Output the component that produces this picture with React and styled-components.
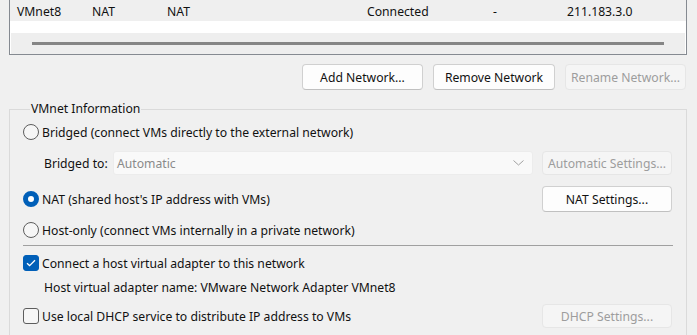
import React from 'react';
import styled, { createGlobalStyle } from 'styled-components';

const GlobalStyle = createGlobalStyle`
  html, body {
    margin: 0;
    padding: 0;
    background: #f0f0f0;
  }
  body {
    font-family: "Noto Sans", "Open Sans", sans-serif;
    font-size: 12.2px;
    color: #111111;
  }
`;

const Page = styled.div`
  width: 697px;
  height: 335px;
  overflow: hidden;
  background: #f0f0f0;
`;

const ListBox = styled.div`
  margin: 0 10px 0 9px;
  height: 54px;
  border: 1px solid #858a91;
  border-top: none;
  background: #ffffff;
  display: flex;
  flex-direction: column;
`;

const ListRow = styled.div`
  height: 21px;
  padding-top: 1px;
  box-sizing: border-box;
  background: #efefef;
  display: grid;
  grid-template-columns: 75px 75px 200px 126px 74px 1fr;
  align-items: center;
  padding-left: 7px;
`;

const Cell = styled.span`
  white-space: nowrap;
`;

const HScroll = styled.div`
  margin: 12px 1px 0 1px;
  height: 21px;
  background: #eeeeee;
  display: flex;
  align-items: center;
  padding-left: 21px;
`;

const Thumb = styled.div`
  width: 632px;
  height: 3px;
  background: #858585;
`;

const ButtonRow = styled.div`
  display: flex;
  justify-content: flex-end;
  gap: 10px;
  padding-right: 11px;
  margin-top: 9px;
`;

const Button = styled.button`
  width: ${(p) => p.$w || 130}px;
  height: ${(p) => p.$h || 26}px;
  box-sizing: border-box;
  font-family: inherit;
  font-size: 12.2px;
  border-radius: 4px;
  padding: 0;
  border: 1px solid ${(p) => (p.disabled ? '#e6e6e6' : '#d0d0d0')};
  border-bottom-color: ${(p) => (p.disabled ? '#e6e6e6' : '#c0c0c0')};
  background: ${(p) => (p.disabled ? '#f5f5f5' : '#fdfdfd')};
  color: ${(p) => (p.disabled ? '#9d9d9d' : '#111111')};
`;

const Group = styled.fieldset`
  margin: 11px 10px 0 9px;
  padding: 0 14px 20px 13px;
  border: 1px solid #dadada;
  min-width: 0;
`;

const Legend = styled.legend`
  margin-left: 7px;
  padding: 0 1px;
  line-height: 16px;
`;

const Row = styled.div`
  display: flex;
  align-items: center;
  justify-content: space-between;
  height: ${(p) => p.$h || 18}px;
  margin-top: ${(p) => p.$top || 0}px;
`;

const Option = styled.label`
  display: flex;
  align-items: center;
  gap: 3px;
  white-space: nowrap;
`;

const RadioMark = styled.span`
  width: 16px;
  height: 16px;
  box-sizing: border-box;
  border-radius: 50%;
  flex: none;
  border: ${(p) => (p.$on ? '5px solid #005fb8' : '1px solid #5d5d5d')};
  background: ${(p) => (p.$on ? '#ffffff' : '#f6f6f6')};
`;

const CheckMark = styled.span`
  width: 16px;
  height: 16px;
  box-sizing: border-box;
  border-radius: 3px;
  flex: none;
  display: flex;
  align-items: center;
  justify-content: center;
  border: 1px solid ${(p) => (p.$on ? '#005fb8' : '#5d5d5d')};
  background: ${(p) => (p.$on ? '#005fb8' : '#f6f6f6')};
`;

const Field = styled.div`
  display: flex;
  align-items: center;
  padding-left: 21px;
  flex: 1;
`;

const FieldLabel = styled.span`
  width: 69px;
  flex: none;
`;

const Combo = styled.div`
  width: 420px;
  height: 24px;
  box-sizing: border-box;
  border: 1px solid #ececec;
  border-radius: 3px;
  background: #f9f9f9;
  color: #8a8a8a;
  display: flex;
  align-items: center;
  justify-content: space-between;
  padding: 0 8px 0 3px;
`;

const Separator = styled.div`
  margin-top: 6px;
  height: 1px;
  background: #a0a0a0;
  margin-right: -1px;
`;

const Indented = styled.div`
  padding-left: 21px;
  white-space: nowrap;
`;

const Chevron = () => (
  <svg width="11" height="6" viewBox="0 0 11 6">
    <path d="M0.5 0.5 L5.5 5 L10.5 0.5" fill="none" stroke="#a0a0a0" strokeWidth="1" />
  </svg>
);

const Tick = () => (
  <svg width="10" height="8" viewBox="0 0 10 8">
    <path d="M1 4.2 L3.6 6.6 L9 1.2" fill="none" stroke="#ffffff" strokeWidth="1.3" />
  </svg>
);

export default function App() {
  return (
    <Page>
      <GlobalStyle />
      <ListBox>
        <ListRow>
          <Cell>VMnet8</Cell>
          <Cell>NAT</Cell>
          <Cell>NAT</Cell>
          <Cell>Connected</Cell>
          <Cell>-</Cell>
          <Cell>211.183.3.0</Cell>
        </ListRow>
        <HScroll>
          <Thumb />
        </HScroll>
      </ListBox>

      <ButtonRow>
        <Button $w={121}>Add Network...</Button>
        <Button $w={122}>Remove Network</Button>
        <Button $w={121} disabled>Rename Network...</Button>
      </ButtonRow>

      <Group>
        <Legend>VMnet Information</Legend>

        <Row $top={6}>
          <Option>
            <RadioMark />
            Bridged (connect VMs directly to the external network)
          </Option>
        </Row>

        <Row $top={10} $h={24}>
          <Field>
            <FieldLabel>Bridged to:</FieldLabel>
            <Combo>
              Automatic
              <Chevron />
            </Combo>
          </Field>
          <Button $h={24} disabled>Automatic Settings...</Button>
        </Row>

        <Row $top={11} $h={26}>
          <Option>
            <RadioMark $on />
            NAT (shared host's IP address with VMs)
          </Option>
          <Button>NAT Settings...</Button>
        </Row>

        <Row $top={9}>
          <Option>
            <RadioMark />
            Host-only (connect VMs internally in a private network)
          </Option>
        </Row>

        <Separator />

        <Row $top={8}>
          <Option>
            <CheckMark $on>
              <Tick />
            </CheckMark>
            Connect a host virtual adapter to this network
          </Option>
        </Row>

        <Row $top={6}>
          <Indented>Host virtual adapter name: VMware Network Adapter VMnet8</Indented>
        </Row>

        <Row $top={8} $h={24}>
          <Option>
            <CheckMark />
            Use local DHCP service to distribute IP address to VMs
          </Option>
          <Button $h={24} disabled>DHCP Settings...</Button>
        </Row>
      </Group>
    </Page>
  );
}
